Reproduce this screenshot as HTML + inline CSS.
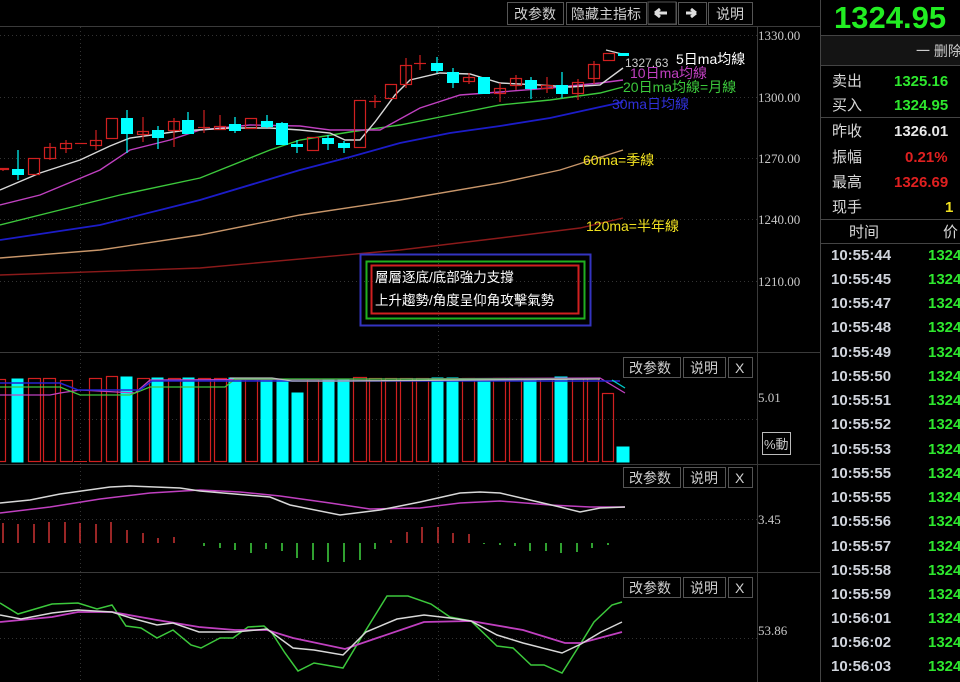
<!DOCTYPE html>
<html><head><meta charset="utf-8">
<style>
html,body{margin:0;padding:0;background:#000;width:960px;height:682px;overflow:hidden}
svg{display:block}
text{font-family:"Liberation Sans","Noto Sans CJK SC",sans-serif}
.ax{font-family:"Liberation Serif","Noto Sans CJK SC",serif;font-size:13px;fill:#c8c8c8}
.btn{fill:#000;stroke:#555;stroke-width:1}
.bt{font-size:14px;fill:#d0d0d0}
.r{fill:none;stroke:#d02020;stroke-width:1.2}
.c{fill:#00ffff;stroke:#00ffff}
.wr{stroke:#d02020;stroke-width:1.2}
.wc{stroke:#00ffff;stroke-width:1.2}
.lab{font-size:14px}
.rt{font-size:15px;fill:#d8d8d8}
.tm{font-size:15px;fill:#d0d4dc;font-weight:bold}
.pr{font-size:15px;fill:#2ee82e;font-weight:bold}
</style></head><body>
<svg width="960" height="682" viewBox="0 0 960 682" xmlns="http://www.w3.org/2000/svg">
<rect width="960" height="682" fill="#000"/>
<!-- frame lines -->
<g stroke="#3a3a3a" stroke-width="1">
<line x1="0" y1="26.5" x2="820" y2="26.5"/>
<line x1="757.5" y1="26" x2="757.5" y2="682"/>
<line x1="0" y1="352.5" x2="820" y2="352.5"/>
<line x1="0" y1="464.5" x2="820" y2="464.5"/>
<line x1="0" y1="572.5" x2="820" y2="572.5"/>
<line x1="820.5" y1="0" x2="820.5" y2="682" stroke="#444"/>
</g>
<!-- dotted grid -->
<g stroke="#333" stroke-width="1" stroke-dasharray="1,3">
<line x1="0" y1="35.5" x2="757" y2="35.5"/>
<line x1="0" y1="97.5" x2="757" y2="97.5"/>
<line x1="0" y1="158.5" x2="757" y2="158.5"/>
<line x1="0" y1="219.5" x2="757" y2="219.5"/>
<line x1="0" y1="281.5" x2="757" y2="281.5"/>
<line x1="0" y1="419.5" x2="757" y2="419.5"/>
<line x1="0" y1="519.5" x2="757" y2="519.5"/>
<line x1="0" y1="638.5" x2="757" y2="638.5"/>
<line x1="80.5" y1="27" x2="80.5" y2="682"/>
<line x1="438.5" y1="27" x2="438.5" y2="682"/>
</g>
<!-- top buttons -->
<g>
<rect class="btn" x="507.5" y="2.5" width="56" height="22"/><text class="bt" x="514" y="19">改参数</text>
<rect class="btn" x="566.5" y="2.5" width="80" height="22"/><text class="bt" x="571" y="19">隐藏主指标</text>
<rect class="btn" x="648.5" y="2.5" width="28" height="22"/><text class="bt" x="654" y="19">🡄</text>
<path d="M654 13h10M654 13l5-4M654 13l5 4" stroke="#ddd" stroke-width="3" fill="none"/>
<rect class="btn" x="678.5" y="2.5" width="28" height="22"/>
<path d="M696 13h-10M696 13l-5-4M696 13l-5 4" stroke="#ddd" stroke-width="3" fill="none"/>
<rect class="btn" x="708.5" y="2.5" width="44" height="22"/><text class="bt" x="716" y="19">说明</text>
</g>
<rect x="648" y="2" width="28" height="22" fill="#000" stroke="#555"/>
<path d="M655 13h12M655 13l5-4M655 13l5 4" stroke="#ddd" stroke-width="3" fill="none"/>
<!-- axis labels -->
<text class="ax" x="758" y="40">1330.00</text>
<text class="ax" x="758" y="102">1300.00</text>
<text class="ax" x="758" y="163">1270.00</text>
<text class="ax" x="758" y="224">1240.00</text>
<text class="ax" x="758" y="286">1210.00</text>
<text class="ax" x="758" y="402">5.01</text>
<text class="ax" x="758" y="524">3.45</text>
<text class="ax" x="758" y="635">53.86</text>
<rect x="762.5" y="432.5" width="28" height="22" fill="none" stroke="#bbb"/>
<text x="764" y="449" font-size="13" fill="#ccc">%動</text>

<!-- MAs -->
<g fill="none" stroke-width="1.4">
<polyline stroke="#8b1a1a" points="0,275 200,268 400,250 500,238 580,228 623,218"/>
<polyline stroke="#c8966a" points="0,258 100,250 200,235 300,215 400,200 500,183 560,170 623,150"/>
<polyline stroke="#1c1cc8" stroke-width="1.8" points="0,240 100,225 200,200 300,170 350,157 400,143 450,133 500,126 550,118 600,107 623,102"/>
<polyline stroke="#3cc83c" points="0,225 60,210 120,195 200,178 270,150 300,140 350,132 400,125 450,115 500,105 550,100 600,93 623,87"/>
<polyline stroke="#c040c0" points="0,205 40,195 100,170 130,150 170,140 200,130 250,125 300,126 330,130 380,130 420,108 460,95 500,92 550,88 600,83 623,80"/>
<polyline stroke="#d8d8d8" points="0,190 40,173 80,160 110,146 130,138 180,131 230,128 270,128 300,130 330,133 345,140 360,140 375,122 395,95 410,80 440,73 470,74 500,83 540,85 570,87 600,85 623,68"/>
<polyline stroke="#d8d8d8" points="606,50 622,54"/>
</g>
<!-- candles -->
<g>
<line class="wr" x1="3" y1="168" x2="3" y2="171"/><rect class="r" x="-2.5" y="168.5" width="11" height="1"/>
<line class="wc" x1="18" y1="150" x2="18" y2="180"/><rect class="c" x="12.5" y="169.5" width="11" height="5"/>
<rect class="r" x="28.5" y="158.5" width="11" height="16"/>
<line class="wr" x1="50" y1="143" x2="50" y2="160"/><rect class="r" x="44.5" y="147.5" width="11" height="11"/>
<line class="wr" x1="66" y1="140" x2="66" y2="153"/><rect class="r" x="60.5" y="143.5" width="11" height="5"/>
<line class="wr" x1="75" y1="143.5" x2="87" y2="143.5"/>
<line class="wr" x1="96" y1="130" x2="96" y2="150"/><rect class="r" x="90.5" y="140.5" width="11" height="5"/>
<rect class="r" x="106.5" y="118.5" width="11" height="20"/>
<line class="wc" x1="127" y1="110" x2="127" y2="153"/><rect class="c" x="121.5" y="118.5" width="11" height="15"/>
<line class="wr" x1="143" y1="117" x2="143" y2="142"/><rect class="r" x="137.5" y="131.5" width="11" height="3"/>
<line class="wc" x1="158" y1="126" x2="158" y2="149"/><rect class="c" x="152.5" y="130.5" width="11" height="7"/>
<line class="wr" x1="174" y1="118" x2="174" y2="147"/><rect class="r" x="168.5" y="121.5" width="11" height="9"/>
<line class="wc" x1="188" y1="112" x2="188" y2="133"/><rect class="c" x="182.5" y="120.5" width="11" height="13"/>
<line class="wr" x1="204" y1="110" x2="204" y2="133"/><line class="wr" x1="198" y1="127.5" x2="210" y2="127.5"/>
<line class="wr" x1="220" y1="115" x2="220" y2="130"/><rect class="r" x="214.5" y="126.5" width="11" height="3"/>
<line class="wc" x1="235" y1="117" x2="235" y2="133"/><rect class="c" x="229.5" y="124.5" width="11" height="6"/>
<rect class="r" x="245.5" y="118.5" width="11" height="10"/>
<line class="wc" x1="267" y1="115" x2="267" y2="128"/><rect class="c" x="261.5" y="121.5" width="11" height="5"/>
<line class="wc" x1="282" y1="122" x2="282" y2="145"/><rect class="c" x="276.5" y="123.5" width="11" height="21"/>
<line class="wc" x1="297" y1="140" x2="297" y2="153"/><rect class="c" x="291.5" y="144.5" width="11" height="2"/>
<rect class="r" x="307.5" y="137.5" width="11" height="13"/>
<line class="wc" x1="328" y1="135" x2="328" y2="150"/><rect class="c" x="322.5" y="138.5" width="11" height="5"/>
<line class="wc" x1="344" y1="141" x2="344" y2="153"/><rect class="c" x="338.5" y="143.5" width="11" height="4"/>
<rect class="r" x="354.5" y="100.5" width="11" height="47"/>
<line class="wr" x1="375" y1="95" x2="375" y2="108"/><line class="wr" x1="369" y1="101.5" x2="381" y2="101.5"/>
<rect class="r" x="385.5" y="84.5" width="11" height="14"/>
<line class="wr" x1="406" y1="58" x2="406" y2="88"/><rect class="r" x="400.5" y="65.5" width="11" height="19"/>
<line class="wr" x1="420" y1="55" x2="420" y2="70"/><line class="wr" x1="414" y1="63.5" x2="426" y2="63.5"/>
<line class="wc" x1="437" y1="57" x2="437" y2="73"/><rect class="c" x="431.5" y="63.5" width="11" height="7"/>
<line class="wc" x1="453" y1="68" x2="453" y2="88"/><rect class="c" x="447.5" y="72.5" width="11" height="10"/>
<line class="wr" x1="469" y1="73" x2="469" y2="84"/><rect class="r" x="463.5" y="77.5" width="11" height="4"/>
<rect class="c" x="478.5" y="77.5" width="11" height="16"/>
<line class="wr" x1="500" y1="83" x2="500" y2="102"/><rect class="r" x="494.5" y="88.5" width="11" height="5"/>
<line class="wr" x1="516" y1="75" x2="516" y2="90"/><rect class="r" x="510.5" y="78.5" width="11" height="7"/>
<line class="wc" x1="531" y1="77" x2="531" y2="99"/><rect class="c" x="525.5" y="80.5" width="11" height="8"/>
<line class="wr" x1="547" y1="77" x2="547" y2="93"/><rect class="r" x="541.5" y="85.5" width="11" height="3"/>
<line class="wc" x1="562" y1="72" x2="562" y2="98"/><rect class="c" x="556.5" y="85.5" width="11" height="8"/>
<line class="wr" x1="578" y1="79" x2="578" y2="100"/><rect class="r" x="572.5" y="82.5" width="11" height="11"/>
<line class="wr" x1="594" y1="61" x2="594" y2="84"/><rect class="r" x="588.5" y="64.5" width="11" height="14"/>
<rect class="r" x="603.5" y="53.5" width="11" height="7"/>
<rect class="c" x="618.5" y="53.5" width="10" height="2"/>
</g>
<!-- MA labels -->
<text x="625" y="67" font-size="12" fill="#ccc" font-family="Liberation Serif,serif">1327.63</text>
<text class="lab" x="676" y="64" fill="#fff">5日ma均線</text>
<text class="lab" x="630" y="78" fill="#c040c0">10日ma均線</text>
<text class="lab" x="623" y="92" fill="#3cc83c">20日ma均線=月線</text>
<text class="lab" x="612" y="109" fill="#3030d8">30ma日均線</text>
<text class="lab" x="583" y="165" fill="#f0e020">60ma=季線</text>
<text class="lab" x="586" y="231" fill="#f0e020">120ma=半年線</text>
<!-- box -->
<rect x="360.5" y="254.5" width="230" height="71" fill="none" stroke="#3434c0" stroke-width="2"/>
<rect x="366.5" y="261.5" width="218" height="57" fill="none" stroke="#20b020" stroke-width="2"/>
<rect x="371.5" y="265.5" width="207" height="48" fill="none" stroke="#d02020" stroke-width="2"/>
<text x="375" y="282" font-size="13.5" fill="#fff">層層逐底/底部強力支撐</text>
<text x="375" y="305" font-size="13.5" fill="#fff">上升趨勢/角度呈仰角攻擊氣勢</text>

<!-- sub-panel buttons -->
<g>
<rect class="btn" x="623.5" y="357.5" width="57" height="20"/><text class="bt" x="629" y="373">改参数</text>
<rect class="btn" x="683.5" y="357.5" width="42" height="20"/><text class="bt" x="690" y="373">说明</text>
<rect class="btn" x="728.5" y="357.5" width="24" height="20"/><text class="bt" x="735" y="373">X</text>
<rect class="btn" x="623.5" y="467.5" width="57" height="20"/><text class="bt" x="629" y="483">改参数</text>
<rect class="btn" x="683.5" y="467.5" width="42" height="20"/><text class="bt" x="690" y="483">说明</text>
<rect class="btn" x="728.5" y="467.5" width="24" height="20"/><text class="bt" x="735" y="483">X</text>
<rect class="btn" x="623.5" y="577.5" width="57" height="20"/><text class="bt" x="629" y="593">改参数</text>
<rect class="btn" x="683.5" y="577.5" width="42" height="20"/><text class="bt" x="690" y="593">说明</text>
<rect class="btn" x="728.5" y="577.5" width="24" height="20"/><text class="bt" x="735" y="593">X</text>
</g>

<!-- volume bars -->
<g>
<rect class="r" x="-3.5" y="379.5" width="9" height="82"/>
<rect class="c" x="12" y="379" width="11" height="83"/>
<rect class="r" x="28.5" y="378.5" width="12" height="83"/>
<rect class="r" x="43.5" y="378.5" width="12" height="83"/>
<rect class="r" x="60.5" y="380.5" width="12" height="81"/>
<line x1="74" y1="461.5" x2="87" y2="461.5" stroke="#d02020"/>
<rect class="r" x="89.5" y="378.5" width="12" height="83"/>
<rect class="r" x="106.5" y="376.5" width="11" height="85"/>
<rect class="c" x="121" y="377" width="11" height="85"/>
<rect class="r" x="137.5" y="378.5" width="12" height="83"/>
<rect class="c" x="152" y="378" width="11" height="84"/>
<rect class="r" x="168.5" y="378.5" width="12" height="83"/>
<rect class="c" x="183" y="378" width="11" height="84"/>
<rect class="r" x="198.5" y="378.5" width="12" height="83"/>
<rect class="r" x="214.5" y="378.5" width="12" height="83"/>
<rect class="c" x="229" y="378" width="12" height="84"/>
<rect class="r" x="245.5" y="378.5" width="12" height="83"/>
<rect class="c" x="261" y="378" width="11" height="84"/>
<rect class="c" x="277" y="379" width="11" height="83"/>
<rect class="c" x="292" y="393" width="11" height="69"/>
<rect class="r" x="307.5" y="379.5" width="11" height="82"/>
<rect class="c" x="323" y="379" width="11" height="83"/>
<rect class="c" x="338" y="379" width="11" height="83"/>
<rect class="r" x="353.5" y="377.5" width="13" height="84"/>
<rect class="r" x="369.5" y="378.5" width="12" height="83"/>
<rect class="r" x="385.5" y="378.5" width="11" height="83"/>
<rect class="r" x="400.5" y="378.5" width="12" height="83"/>
<rect class="r" x="416.5" y="378.5" width="12" height="83"/>
<rect class="c" x="432" y="378" width="11" height="84"/>
<rect class="c" x="447" y="378" width="11" height="84"/>
<rect class="r" x="462.5" y="378.5" width="12" height="83"/>
<rect class="c" x="478" y="379" width="12" height="83"/>
<rect class="r" x="493.5" y="378.5" width="12" height="83"/>
<rect class="r" x="509.5" y="378.5" width="12" height="83"/>
<rect class="c" x="524" y="379" width="12" height="83"/>
<rect class="r" x="540.5" y="378.5" width="12" height="83"/>
<rect class="c" x="555" y="377" width="12" height="85"/>
<rect class="r" x="572.5" y="378.5" width="11" height="83"/>
<rect class="r" x="587.5" y="378.5" width="11" height="83"/>
<rect class="r" x="602.5" y="393.5" width="11" height="68"/>
<rect class="c" x="617" y="447" width="12" height="15"/>
</g>
<g fill="none" stroke-width="1.3">
<polyline stroke="#c040c0" points="0,395 50,395 60,393 80,390 135,393 150,380 600,378 625,393"/>
<polyline stroke="#3cc83c" points="0,387 60,387 80,395 130,395 150,387 225,387 235,379 300,379 600,379"/>
<polyline stroke="#2424d0" stroke-width="1.6" points="0,383 60,383 78,390 140,390 152,381 620,381"/>
<polyline stroke="#bbbbbb" points="230,378 272,378 292,381 340,381 600,379"/>
<polyline stroke="#00cccc" points="612,380 625,388"/>
</g>

<!-- MACD -->
<g stroke-width="1.6">
<g stroke="#c03030">
<line x1="3" y1="523" x2="3" y2="543"/><line x1="18" y1="524" x2="18" y2="543"/><line x1="34" y1="524" x2="34" y2="543"/><line x1="49" y1="522" x2="49" y2="543"/><line x1="65" y1="522" x2="65" y2="543"/><line x1="80" y1="523" x2="80" y2="543"/><line x1="96" y1="524" x2="96" y2="543"/><line x1="111" y1="522" x2="111" y2="543"/><line x1="127" y1="530" x2="127" y2="543"/><line x1="143" y1="533" x2="143" y2="543"/><line x1="158" y1="538" x2="158" y2="543"/><line x1="174" y1="537" x2="174" y2="543"/><line x1="391" y1="540" x2="391" y2="543"/><line x1="407" y1="532" x2="407" y2="543"/><line x1="422" y1="527" x2="422" y2="543"/><line x1="438" y1="527" x2="438" y2="543"/><line x1="453" y1="533" x2="453" y2="543"/><line x1="469" y1="534" x2="469" y2="543"/>
</g>
<g stroke="#3cc83c">
<line x1="204" y1="543" x2="204" y2="546"/><line x1="220" y1="543" x2="220" y2="548"/><line x1="235" y1="543" x2="235" y2="550"/><line x1="251" y1="543" x2="251" y2="553"/><line x1="266" y1="543" x2="266" y2="549"/><line x1="282" y1="543" x2="282" y2="551"/><line x1="297" y1="543" x2="297" y2="558"/><line x1="313" y1="543" x2="313" y2="560"/><line x1="328" y1="543" x2="328" y2="562"/><line x1="344" y1="543" x2="344" y2="562"/><line x1="360" y1="543" x2="360" y2="560"/><line x1="375" y1="543" x2="375" y2="549"/><line x1="484" y1="543" x2="484" y2="544"/><line x1="500" y1="543" x2="500" y2="545"/><line x1="515" y1="543" x2="515" y2="546"/><line x1="530" y1="543" x2="530" y2="551"/><line x1="546" y1="543" x2="546" y2="551"/><line x1="561" y1="543" x2="561" y2="553"/><line x1="577" y1="543" x2="577" y2="552"/><line x1="592" y1="543" x2="592" y2="548"/><line x1="608" y1="543" x2="608" y2="545"/>
</g>
</g>
<g fill="none" stroke-width="1.5">
<polyline stroke="#c040c0" points="0,513 50,507 100,499 150,493 200,490 240,492 280,496 330,503 370,509 420,508 460,503 500,501 550,505 590,507 625,507"/>
<polyline stroke="#d8d8d8" points="0,503 30,500 60,494 110,487 130,486 180,488 200,491 270,497 290,505 340,515 380,510 420,502 460,493 480,492 500,493 530,500 560,507 580,512 600,508 625,507"/>
</g>

<!-- KDJ -->
<g fill="none" stroke-width="1.5">
<polyline stroke="#3cc83c" points="0,603 18,614 52,604 78,603 97,609 112,605 126,626 141,628 157,638 173,630 191,645 201,648 220,638 233,638 248,627 264,626 272,633 285,653 298,671 314,663 343,668 361,638 387,596 408,596 431,604 450,617 471,621 497,646 513,648 531,665 544,665 562,673 581,643 594,622 612,605 622,602"/>
<polyline stroke="#c040c0" stroke-width="1.8" points="0,622 52,617 78,612 112,612 157,620 199,627 235,630 267,630 293,638 345,649 377,638 424,622 471,621 523,630 565,643 581,643 622,632"/>
<polyline stroke="#d8d8d8" points="0,615 21,619 52,613 78,610 112,612 131,618 157,625 173,623 199,632 235,632 267,629 293,648 314,650 343,655 366,632 397,619 424,615 450,618 471,621 497,635 523,643 562,653 581,644 601,632 622,622"/>
</g>

<!-- right panel -->
<text x="834" y="28" font-size="31" font-weight="bold" fill="#22ee22" font-family="Liberation Sans,sans-serif">1324.95</text>
<rect x="821" y="36" width="139" height="29" fill="#141414"/>
<line x1="821" y1="35.5" x2="960" y2="35.5" stroke="#444"/>
<line x1="821" y1="65.5" x2="960" y2="65.5" stroke="#444"/>
<text x="916" y="56" font-size="14" fill="#ccc">一 删除</text>
<text class="rt" x="832" y="86">卖出</text><text class="pr" x="894" y="86">1325.16</text>
<text class="rt" x="832" y="110">买入</text><text class="pr" x="894" y="110">1324.95</text>
<line x1="821" y1="117.5" x2="960" y2="117.5" stroke="#444"/>
<text class="rt" x="832" y="136">昨收</text><text x="894" y="136" font-size="15" font-weight="bold" fill="#e8e8e8">1326.01</text>
<text class="rt" x="832" y="162">振幅</text><text x="905" y="162" font-size="15" font-weight="bold" fill="#e02020">0.21%</text>
<text class="rt" x="832" y="187">最高</text><text x="894" y="187" font-size="15" font-weight="bold" fill="#e02020">1326.69</text>
<text class="rt" x="832" y="212">现手</text><text x="945" y="212" font-size="15" font-weight="bold" fill="#f0e020">1</text>
<line x1="821" y1="219.5" x2="960" y2="219.5" stroke="#444"/>
<text class="rt" x="849" y="237">时间</text><text class="rt" x="943" y="237">价</text>
<line x1="821" y1="243.5" x2="960" y2="243.5" stroke="#444"/>
<g>
<text class="tm" x="831" y="260">10:55:44</text><text class="pr" x="928" y="260">1324</text>
<text class="tm" x="831" y="284">10:55:45</text><text class="pr" x="928" y="284">1324</text>
<text class="tm" x="831" y="308">10:55:47</text><text class="pr" x="928" y="308">1324</text>
<text class="tm" x="831" y="332">10:55:48</text><text class="pr" x="928" y="332">1324</text>
<text class="tm" x="831" y="357">10:55:49</text><text class="pr" x="928" y="357">1324</text>
<text class="tm" x="831" y="381">10:55:50</text><text class="pr" x="928" y="381">1324</text>
<text class="tm" x="831" y="405">10:55:51</text><text class="pr" x="928" y="405">1324</text>
<text class="tm" x="831" y="429">10:55:52</text><text class="pr" x="928" y="429">1324</text>
<text class="tm" x="831" y="454">10:55:53</text><text class="pr" x="928" y="454">1324</text>
<text class="tm" x="831" y="478">10:55:55</text><text class="pr" x="928" y="478">1324</text>
<text class="tm" x="831" y="502">10:55:55</text><text class="pr" x="928" y="502">1324</text>
<text class="tm" x="831" y="526">10:55:56</text><text class="pr" x="928" y="526">1324</text>
<text class="tm" x="831" y="551">10:55:57</text><text class="pr" x="928" y="551">1324</text>
<text class="tm" x="831" y="575">10:55:58</text><text class="pr" x="928" y="575">1324</text>
<text class="tm" x="831" y="599">10:55:59</text><text class="pr" x="928" y="599">1324</text>
<text class="tm" x="831" y="623">10:56:01</text><text class="pr" x="928" y="623">1324</text>
<text class="tm" x="831" y="647">10:56:02</text><text class="pr" x="928" y="647">1324</text>
<text class="tm" x="831" y="671">10:56:03</text><text class="pr" x="928" y="671">1324</text>
<text class="tm" x="831" y="695">10:56:05</text><text class="pr" x="928" y="695">1324</text>
</g>
</svg>
</body></html>
